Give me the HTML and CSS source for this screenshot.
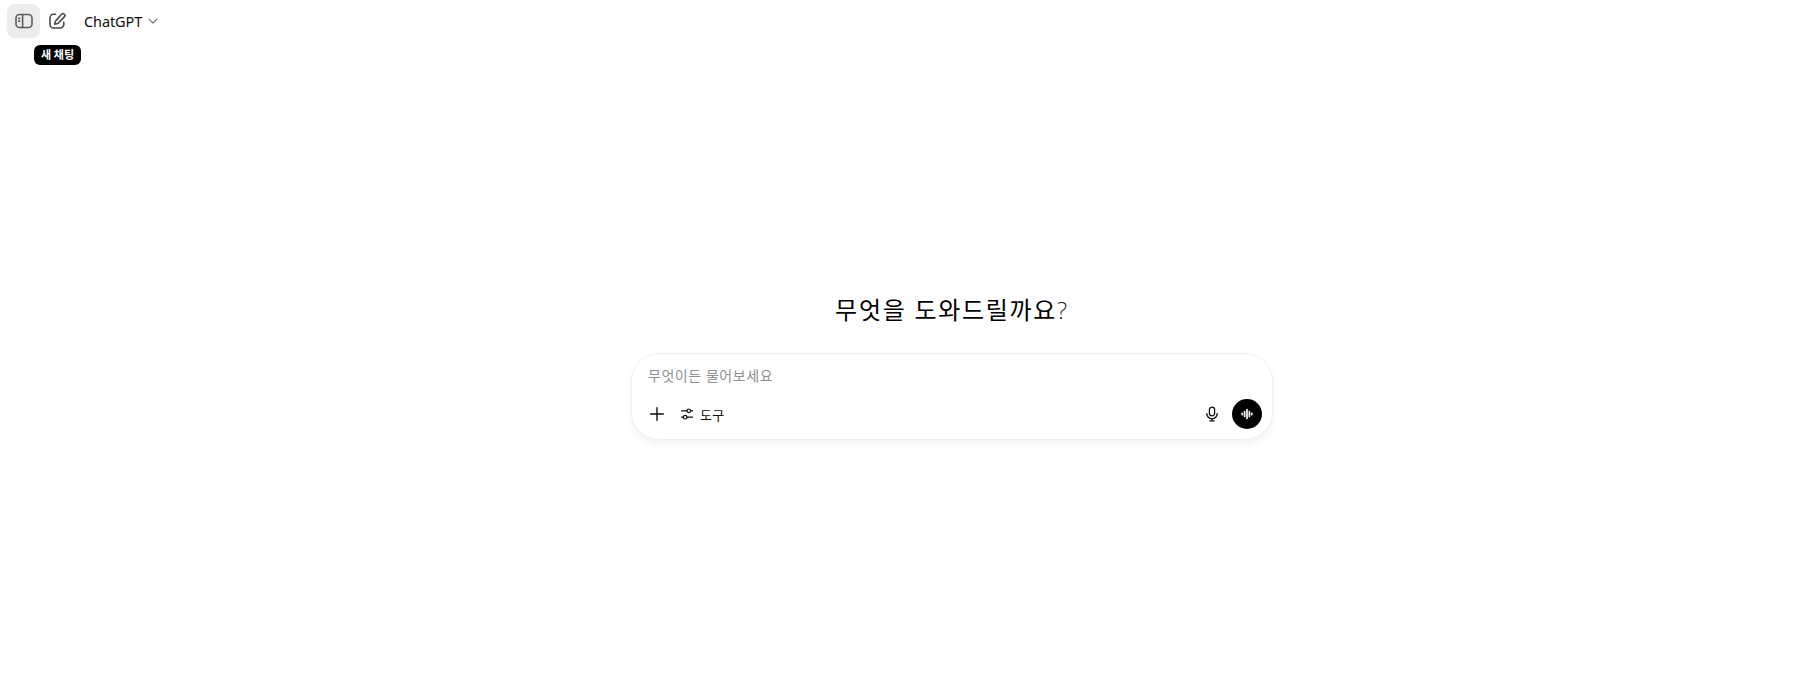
FILE: index.html
```html
<!DOCTYPE html>
<html lang="ko">
<head>
<meta charset="utf-8">
<title>ChatGPT</title>
<link rel="stylesheet" href="styles.css">
</head>
<body>
<div class="page">
  <header class="topbar">
    <button class="icon-btn active" aria-label="사이드바">
      <svg width="20" height="20" viewBox="0 0 20 20" fill="none" stroke="#5d5d5d" stroke-width="1.6"><rect x="2" y="3.5" width="16" height="13" rx="3.6"/><path d="M8.6 3.5v13"/><path d="M4.9 7.4h.7M4.9 10.2h.7" stroke-linecap="round" stroke-width="1.7"/></svg>
    </button>
    <button class="icon-btn" aria-label="새 채팅">
      <svg width="20" height="20" viewBox="0 0 20 20" fill="none" stroke="#4a4a4a" stroke-width="1.6" stroke-linecap="round" stroke-linejoin="round"><path d="M8.6 3.2H6.5A3.5 3.5 0 0 0 3 6.7v6.8A3.5 3.5 0 0 0 6.5 17h6.8a3.5 3.5 0 0 0 3.5-3.5v-2.2"/><path d="M14.6 3.2a1.9 1.9 0 0 1 2.7 2.7l-6 6.1c-.4.4-.9.7-1.5.8l-2.1.4.4-2.1c.1-.6.4-1.1.8-1.5z"/></svg>
    </button>
    <div class="model">
      <span>ChatGPT</span>
      <svg width="12" height="12" viewBox="0 0 12 12" fill="none" stroke="#6e6e6e" stroke-width="1.1" stroke-linecap="round" stroke-linejoin="round"><path d="M2 4.2 6 8.2l4-4"/></svg>
    </div>
  </header>
  <div class="tooltip">새 채팅</div>
  <main class="main">
    <h1 class="title">무엇을 도와드릴까요<span class="q">?</span></h1>
    <div class="composer">
      <div class="placeholder">무엇이든 물어보세요</div>
      <div class="actions">
        <div class="actions-left">
          <button class="plain-btn plus" aria-label="추가">
            <svg width="20" height="20" viewBox="0 0 20 20" fill="none" stroke="#0d0d0d" stroke-width="1.4" stroke-linecap="round"><path d="M10 3.7v12.6M3.7 10h12.6"/></svg>
          </button>
          <button class="plain-btn tools">
            <svg width="14" height="14" viewBox="0 0 14 14" fill="none" stroke="#0d0d0d" stroke-width="1.2" stroke-linecap="round"><path d="M1.5 3.8h5.4M10.6 3.8h2M1.5 10.2h2M7.1 10.2h5.4"/><circle cx="8.8" cy="3.8" r="1.8"/><circle cx="5.2" cy="10.2" r="1.8"/></svg>
            <span>도구</span>
          </button>
        </div>
        <div class="actions-right">
          <svg class="mic" width="16" height="16" viewBox="0 0 16 16" fill="none" stroke="#0d0d0d" stroke-width="1.3" stroke-linecap="round"><rect x="5.4" y="1.2" width="5.2" height="8.6" rx="2.6"/><path d="M2.8 7.6a5.2 5.2 0 0 0 10.4 0M8 12.8v1.9M5.8 14.8h4.4"/></svg>
          <button class="voice" aria-label="음성">
            <svg width="18" height="18" viewBox="0 0 18 18" fill="none" stroke="#fff" stroke-width="1.7" stroke-linecap="round"><path d="M4.2 8.4v1.2M6.6 6.6v4.8M9 4.6v8.8M11.4 6.6v4.8M13.8 8.4v1.2"/></svg>
          </button>
        </div>
      </div>
    </div>
  </main>
</div>
</body>
</html>
```
FILE: styles.css
```css
* { box-sizing: border-box; }
html, body { margin: 0; height: 100%; background: #fff; }
body {
  font-family: "Noto Sans", "Noto Sans CJK KR", sans-serif;
  color: #0d0d0d;
  overflow: hidden;
}
button { border: 0; background: none; padding: 0; font: inherit; color: inherit; }
.page { position: relative; height: 684px; display: flex; flex-direction: column; }
.topbar {
  height: 42px;
  padding: 4px 0 0 7px;
  display: flex;
  align-items: flex-start;
  gap: 0;
}
.icon-btn {
  width: 33px;
  height: 34px;
  border-radius: 8px;
  display: flex;
  align-items: center;
  justify-content: center;
}
.icon-btn.active { background: #ececec; }
.model {
  margin-left: 11px;
  height: 34px;
  display: flex;
  align-items: center;
  gap: 5px;
  font-size: 14.5px;
  letter-spacing: -0.1px;
}
.tooltip {
  position: absolute;
  left: 34px;
  top: 45px;
  width: 47px;
  height: 20px;
  background: #000;
  color: #fff;
  border-radius: 6px;
  font-size: 11px;
  font-weight: 700;
  line-height: 19px;
  text-align: center;
}
.main {
  flex: 1;
  display: flex;
  flex-direction: column;
  align-items: center;
  padding-top: 247px;
  padding-left: 92px;
}
.title {
  margin: 0;
  height: 42px;
  font-size: 24px;
  line-height: 42px;
  font-weight: 400;
  color: #000;
  letter-spacing: 1.7px;
  word-spacing: 0;
}
.q { color: #222; font-family: "Open Sans", sans-serif; font-weight: 300; }
.composer {
  margin-top: 22px;
  width: 642px;
  height: 87px;
  border: 1px solid #f0f0f0;
  border-radius: 28px;
  background: #fff;
  box-shadow: 0 4px 6px rgba(0,0,0,.05);
  padding: 12px 10px 10px 16px;
  display: flex;
  flex-direction: column;
  justify-content: space-between;
}
.placeholder { font-size: 14px; line-height: 20px; color: #8f8f8f; letter-spacing: .55px; }
.actions { display: flex; align-items: center; justify-content: space-between; margin-left: -1px; }
.actions-left, .actions-right { display: flex; align-items: center; }
.plain-btn { display: flex; align-items: center; }
.tools { margin-left: 13px; gap: 6px; font-size: 13px; letter-spacing: .3px; }
.mic { margin-right: 12px; }
.voice {
  width: 30px;
  height: 30px;
  border-radius: 50%;
  background: #000;
  display: flex;
  align-items: center;
  justify-content: center;
}
```
